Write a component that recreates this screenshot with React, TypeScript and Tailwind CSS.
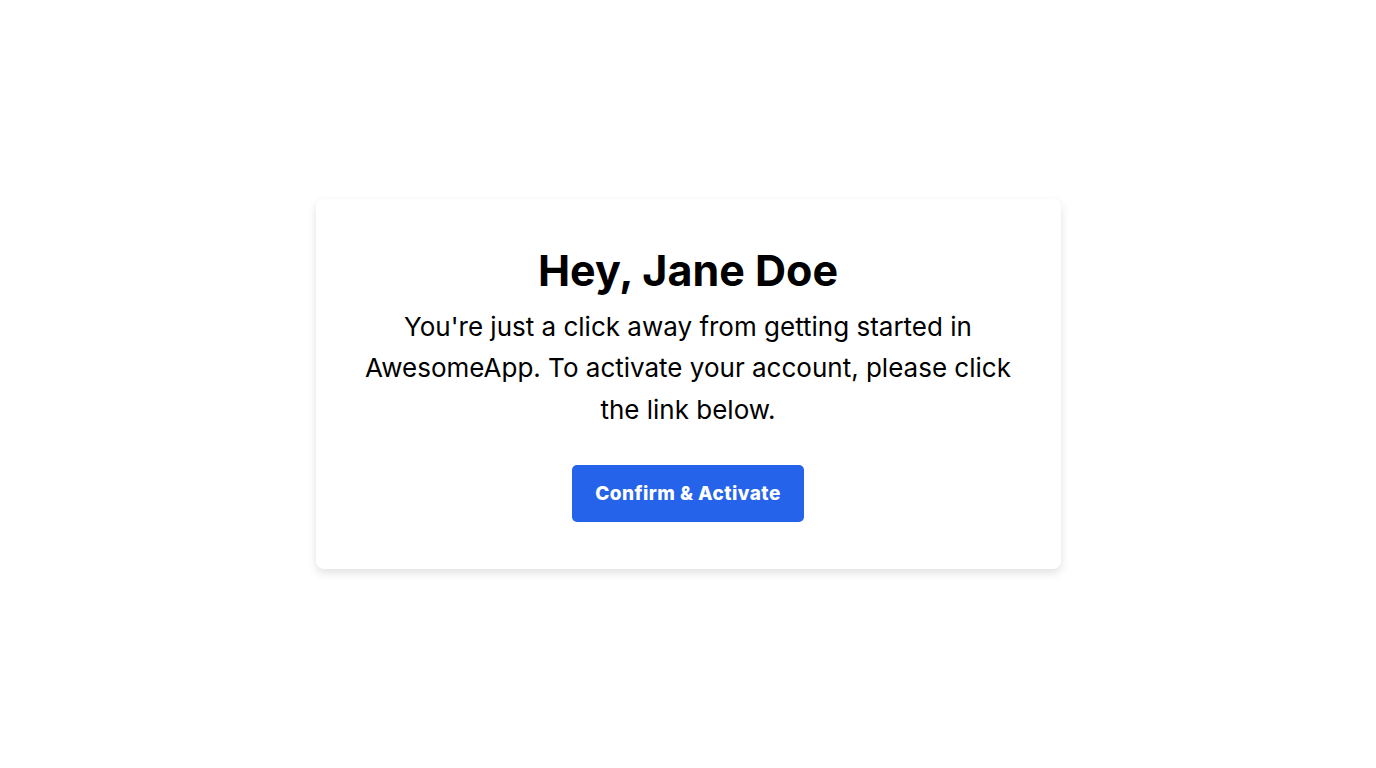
const App = () => {
  return (
    <div className="flex min-h-screen items-center justify-center bg-white font-['Inter',sans-serif] text-black">
      <div className="flex w-[745px] flex-col items-center rounded-lg bg-white px-12 pb-[47px] pt-[45px] text-center shadow-[0_4px_10px_rgba(0,0,0,0.12)]">
        <h1 className="text-[43px] font-bold leading-[52px]">Hey, Jane Doe</h1>
        <p className="mt-[10px] text-[26px] leading-[41.5px]">
          You're just a click away from getting started in AwesomeApp. To
          activate your account, please click the link below.
        </p>
        <button className="mt-[35px] rounded-[5px] bg-[#2563eb] px-[23px] py-[16px] text-[19px] font-extrabold leading-[25px] tracking-[0.45px] text-white">
          Confirm &amp; Activate
        </button>
      </div>
    </div>
  );
};

export default App;
